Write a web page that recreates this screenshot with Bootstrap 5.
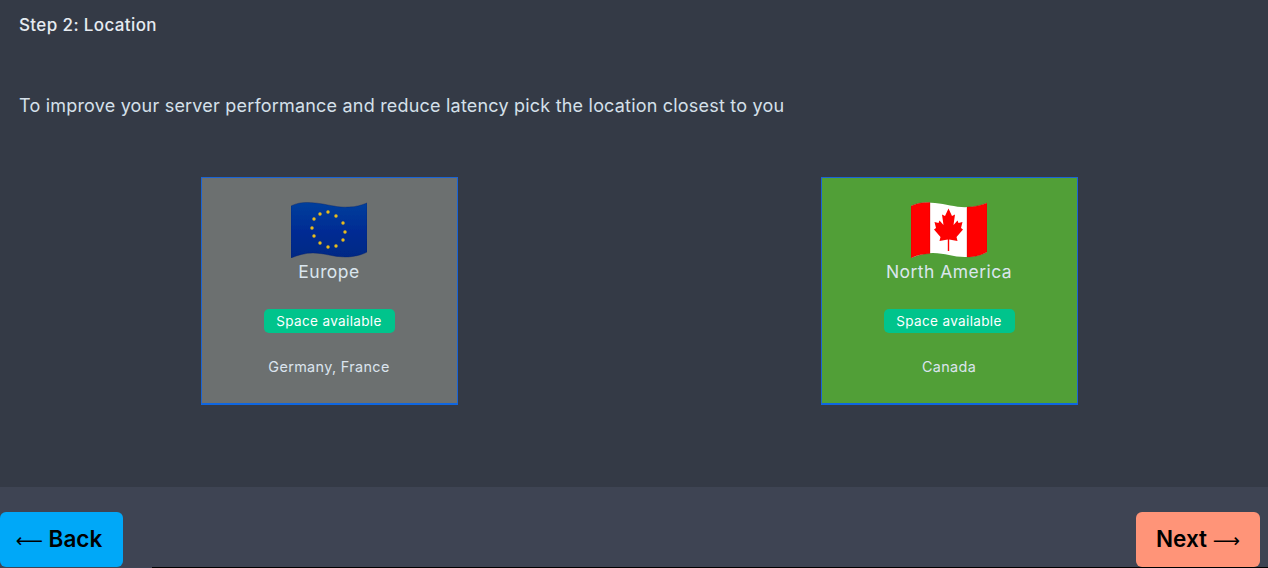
<!DOCTYPE html>
<html lang="en">
<head>
  <meta charset="UTF-8" />
  <meta name="viewport" content="width=device-width, initial-scale=1" />
  <title>Step 2: Location</title>
  <link href="https://cdn.jsdelivr.net/npm/bootstrap@5.3.0/dist/css/bootstrap.min.css" rel="stylesheet" />
  <style>
    html, body {
      height: 568px;
      overflow: hidden;
    }

    body {
      background-color: #343a46;
      font-family: "Inter", "Liberation Sans", sans-serif;
      color: #dbe4ee;
    }

    .page-wrap {
      height: 568px;
    }

    .step-area {
      height: 487px;
      padding: 15px 9px 0 19px;
    }

    .step-title {
      font-size: 17px;
      font-weight: 500;
      letter-spacing: .38px;
      line-height: 20px;
      margin-bottom: 0;
      color: #e6ebf1;
    }

    .step-intro {
      font-size: 18px;
      font-weight: 400;
      letter-spacing: .2px;
      line-height: 24px;
      margin: 59px 0 59px;
      color: #d5e0ea;
    }

    .region-box {
      width: 257px;
      height: 228px;
      padding-top: 24px;
      border: 1px solid #1a64d6;
      border-bottom: 2px solid #0f66e0;
    }

    .region-grey { background-color: #6c7070; }
    .region-green { background-color: #519f37; }

    .flag-pic {
      display: block;
      width: 76px;
      height: 56px;
      margin: 0 auto;
    }

    .region-name {
      font-size: 17.5px;
      letter-spacing: .45px;
      line-height: 24px;
      margin-top: 2px;
      color: #dbe6ee;
    }

    .space-tag {
      background-color: #00c48c;
      color: #fff;
      font-size: 13.5px;
      font-weight: 400;
      letter-spacing: .35px;
      line-height: 24px;
      width: 131px;
      border-radius: 5px;
      margin-top: 25px;
    }

    .region-list {
      font-size: 14.4px;
      letter-spacing: .35px;
      line-height: 20px;
      margin-top: 24px;
      color: #dbe4ee;
    }

    .step-foot {
      height: 81px;
      background-color: #3e4453;
      padding: 25px 8px 1px 0;
    }

    .foot-btn {
      width: 123px;
      height: 55px;
      border: 0;
      border-radius: 6px;
      color: #000;
      font-size: 22.5px;
      font-weight: 600;
      padding: 0 0 2px;
    }

    .foot-btn:hover { color: #000; }
    .btn-back, .btn-back:hover { background-color: #00a8f8; padding-right: 5px; }
    .btn-next, .btn-next:hover { background-color: #ff9478; width: 124px; }

    .arrow-glyph {
      font-family: "DejaVu Sans", sans-serif;
      font-weight: 400;
      font-size: 19px;
    }

    .bottom-line {
      position: absolute;
      left: 152px;
      right: 0;
      bottom: 0;
      height: 1px;
      background-color: #000;
    }
  </style>
</head>
<body>
  <div class="page-wrap position-relative d-flex flex-column">
    <div class="step-area">
      <p class="step-title">Step 2: Location</p>
      <p class="step-intro">To improve your server performance and reduce latency pick the location closest to you</p>

      <div class="d-flex justify-content-around">
        <div class="region-box region-grey text-center">
          <svg class="flag-pic" viewBox="0 0 76 56" aria-hidden="true">
            <defs>
              <filter id="soft1"><feGaussianBlur stdDeviation="0.6" /></filter>
              <linearGradient id="euShade" x1="0" x2="0" y1="0" y2="1">
                <stop offset="0" stop-color="#063f9c" />
                <stop offset="0.5" stop-color="#022c94" />
                <stop offset="1" stop-color="#022884" />
              </linearGradient>
            </defs>
            <g filter="url(#soft1)">
              <path d="M0 4C8 0 16 0 24 1C36 2 46 6 58 5C65 5 71 3 76 1V50C71 53 62 55 54 55C42 55 34 51 22 51C14 51 7 53 0 56Z" fill="url(#euShade)" stroke="#02246e" stroke-opacity=".5" stroke-width=".8" />
              <g fill="#e8bc1a">
                <circle cx="37" cy="10" r="1.7" /><circle cx="45" cy="14" r="1.7" /><circle cx="52" cy="21" r="1.7" /><circle cx="54" cy="30" r="1.7" />
                <circle cx="52" cy="38" r="1.7" /><circle cx="45" cy="44" r="1.7" /><circle cx="37" cy="45" r="1.7" /><circle cx="29" cy="41" r="1.7" />
                <circle cx="23" cy="34" r="1.7" /><circle cx="21" cy="26" r="1.7" /><circle cx="23" cy="17" r="1.7" /><circle cx="29" cy="12" r="1.7" />
              </g>
            </g>
          </svg>
          <div class="region-name">Europe</div>
          <span class="space-tag d-inline-block">Space available</span>
          <div class="region-list">Germany, France</div>
        </div>

        <div class="region-box region-green text-center">
          <svg class="flag-pic" viewBox="0 0 76 56" aria-hidden="true">
            <defs>
              <filter id="soft2"><feGaussianBlur stdDeviation="0.6" /></filter>
            </defs>
            <g filter="url(#soft2)">
              <path d="M0 4C8 0 16 0 24 1C36 2 46 6 58 5C65 5 71 3 76 1V50C71 53 62 55 54 55C42 55 34 51 22 51C14 51 7 53 0 56Z" fill="#fff" />
              <path d="M0 4C6 1 13 0 19 .5V51.500C12 52 6 53 0 56Z" fill="#f00" stroke="#b80000" stroke-opacity=".5" stroke-width=".6" />
              <path d="M56 5C64 5 71 3 76 1V50C71 53 63 55 56 55Z" fill="#f00" stroke="#b80000" stroke-opacity=".5" stroke-width=".6" />
              <path d="M37.500 6.500L41 14L44 12.500L42.500 23L46.500 18.500L47.500 21L51.500 20L50 26L52 27.500L45.500 35L46.500 39L38.200 37.500V49H36.800V37.500L28.500 39L29.500 35L23 27.500L25 26L23.500 20L27.500 21L28.500 18.500L32.500 23L31 12.500L34 14Z" fill="#f00" />
            </g>
          </svg>
          <div class="region-name">North America</div>
          <span class="space-tag d-inline-block">Space available</span>
          <div class="region-list">Canada</div>
        </div>
      </div>
    </div>

    <div class="step-foot d-flex justify-content-between align-items-start">
      <button type="button" class="btn foot-btn btn-back"><span class="arrow-glyph">⟵</span> Back</button>
      <button type="button" class="btn foot-btn btn-next">Next <span class="arrow-glyph">⟶</span></button>
    </div>
    <div class="bottom-line"></div>
  </div>

  <script src="https://cdn.jsdelivr.net/npm/bootstrap@5.3.0/dist/js/bootstrap.bundle.min.js"></script>
</body>
</html>
